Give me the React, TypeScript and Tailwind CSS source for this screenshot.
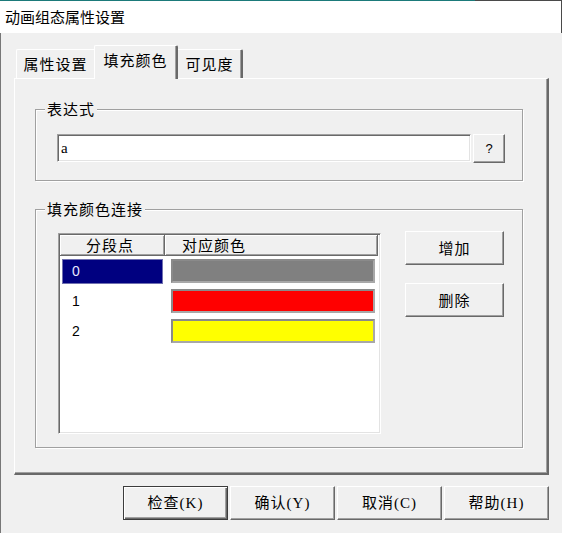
const raised =
  "bg-[#f0f0f0] border border-t-white border-l-white border-r-[#696969] border-b-[#696969] shadow-[inset_-1px_-1px_0_#a0a0a0]";
const sunken =
  "border border-t-[#a0a0a0] border-l-[#a0a0a0] border-r-white border-b-white shadow-[inset_1px_1px_0_#696969,inset_-1px_-1px_0_#e3e3e3]";
const serif = "font-['Liberation_Serif','Noto_Sans_CJK_SC',serif]";

const rows = [
  { n: "0", color: "bg-[#808080]", selected: true },
  { n: "1", color: "bg-[#ff0000]", selected: false },
  { n: "2", color: "bg-[#ffff00]", selected: false },
];

function GroupBox({ title, children }: { title: string; children: React.ReactNode }) {
  return (
    <fieldset className="w-[488px] border border-[#a0a0a0] shadow-[inset_1px_1px_0_#fff,1px_1px_0_#fff]">
      <legend className="ml-[9px] px-[2px] text-[15px] leading-[18px] tracking-[1px] bg-[#f0f0f0]">{title}</legend>
      {children}
    </fieldset>
  );
}

export default function App() {
  return (
    <div className="w-[562px] h-[533px] flex flex-col overflow-hidden bg-[#f0f0f0] text-black font-['Noto_Sans_CJK_SC',sans-serif]">
      {/* window frame top */}
      <div className="flex h-px">
        <div className="w-[475px] bg-[#1b7a7a]" />
        <div className="flex-1 bg-[#4a4a4a]" />
      </div>
      <div className="h-[32px] bg-white flex items-center pl-[5px] text-[15px] border-r border-[#4a4a4a]">
        动画组态属性设置
      </div>

      <div className="flex-1 border-l border-[#777777] pl-[13px] pt-[12px]">
        {/* Tabs */}
        <div className="flex items-end h-[33px] pl-[2px]">
          <div className="w-[78px] h-[29px] flex items-center justify-center text-[15px] tracking-[1px] border-t border-l border-white rounded-tl-[2px]">
            属性设置
          </div>
          <div className="relative z-10 -mb-px w-[84px] h-[34px] flex items-center justify-center pb-[4px] text-[15px] tracking-[1px] bg-[#f0f0f0] border-t border-l border-r-2 border-t-white border-l-white border-r-[#696969] rounded-t-[2px] shadow-[inset_-1px_0_0_#a0a0a0]">
            填充颜色
          </div>
          <div className="w-[65px] h-[29px] flex items-center justify-center text-[15px] tracking-[1px] border-t border-r-2 border-t-white border-r-[#696969] rounded-tr-[2px] shadow-[inset_-1px_0_0_#a0a0a0]">
            可见度
          </div>
        </div>

        {/* Tab panel */}
        <div className="w-[535px] h-[397px] pt-[21px] pl-[20px] border-t border-l border-r-2 border-b-2 border-t-white border-l-white border-r-[#696969] border-b-[#696969] shadow-[inset_-1px_-1px_0_#a0a0a0]">
          <GroupBox title="表达式">
            <div className="flex items-start pl-[21px] pt-[16px] pb-[17px]">
              <div className={`w-[414px] h-[28px] bg-white flex items-center pl-[3px] text-[15px] ${serif} ${sunken}`}>
                a
              </div>
              <button className={`ml-[2px] w-[32px] h-[29px] text-[13px] font-['Liberation_Sans',sans-serif] ${raised}`}>
                ?
              </button>
            </div>
          </GroupBox>

          <div className="h-[19px]" />

          <GroupBox title="填充颜色连接">
            <div className="flex items-start pl-[22px] pt-[13px] pb-[13px]">
              {/* list */}
              <div className={`mt-[2px] w-[323px] h-[201px] bg-white p-px ${sunken}`}>
                <div className="flex h-[21px] text-[15px] tracking-[1px]">
                  <div className="w-[105px] flex items-center pl-[26px] bg-[#f0f0f0] border-r border-b border-r-[#696969] border-b-[#696969] shadow-[inset_1px_1px_0_#fff,inset_-1px_-1px_0_#a0a0a0]">
                    分段点
                  </div>
                  <div className="w-[213px] flex items-center pl-[17px] bg-[#f0f0f0] border-r border-b border-r-[#696969] border-b-[#696969] shadow-[inset_1px_1px_0_#fff,inset_-1px_-1px_0_#a0a0a0]">
                    对应颜色
                  </div>
                </div>
                <div className="pt-[3px]">
                  {rows.map((r) => (
                    <div key={r.n} className="flex h-[30px] items-start">
                      <div
                        className={`ml-[2px] w-[101px] h-[25px] flex items-center pl-[9px] text-[14px] font-['Liberation_Sans',sans-serif] ${
                          r.selected ? "bg-[#000080] text-[#e8e8ff] border border-[#7070b0]" : "border border-transparent"
                        }`}
                      >
                        {r.n}
                      </div>
                      <div
                        className={`ml-[8px] w-[204px] h-[24px] border-2 border-t-[#8a8a8a] border-l-[#8a8a8a] border-r-[#a8a8a8] border-b-[#a8a8a8] ${r.color}`}
                      />
                    </div>
                  ))}
                </div>
              </div>

              {/* side buttons */}
              <div className="ml-[24px] flex flex-col gap-[18px]">
                <button className={`w-[99px] h-[34px] text-[15px] tracking-[1px] ${raised}`}>增加</button>
                <button className={`w-[99px] h-[34px] text-[15px] tracking-[1px] ${raised}`}>删除</button>
              </div>
            </div>
          </GroupBox>
        </div>

        {/* Dialog buttons */}
        <div className={`flex justify-end gap-[2px] pr-[13px] pt-[11px] text-[15px] tracking-[1px] ${serif}`}>
          <button className="w-[105px] h-[34px] bg-[#f0f0f0] border border-[#3c3c3c] shadow-[inset_1px_1px_0_#fff,inset_-1px_-1px_0_#696969,inset_-2px_-2px_0_#a0a0a0]">
            检查(K)
          </button>
          <button className={`w-[105px] h-[34px] ${raised}`}>确认(Y)</button>
          <button className={`w-[105px] h-[34px] ${raised}`}>取消(C)</button>
          <button className={`w-[105px] h-[34px] ${raised}`}>帮助(H)</button>
        </div>
      </div>
    </div>
  );
}
